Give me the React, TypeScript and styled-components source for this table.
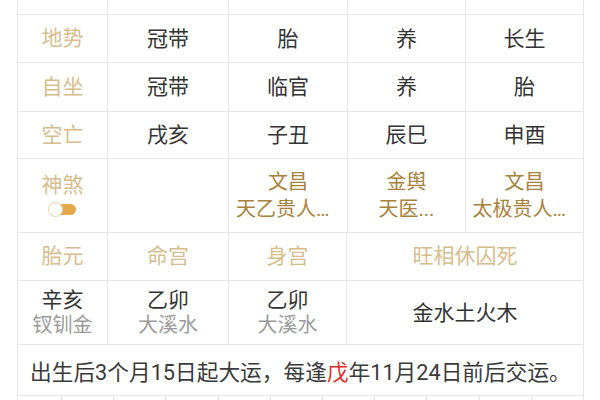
import React from "react";
import styled, { createGlobalStyle } from "styled-components";

const Global = createGlobalStyle`
  html, body { margin: 0; padding: 0; background: #fff; }
  body { font-family: Roboto, "Noto Sans CJK SC", sans-serif; overflow: hidden; }
`;

const Page = styled.div`
  width: 600px;
  height: 400px;
  overflow: hidden;
  padding-left: 17px;
  box-sizing: border-box;
`;

const Table = styled.div`
  width: 567px;
  margin-top: -34px;
  border-left: 1px solid #e6e6e6;
  box-sizing: border-box;
`;

const Row = styled.div<{ $cols: string; $h: number }>`
  display: grid;
  grid-template-columns: ${(p) => p.$cols};
  height: ${(p) => p.$h}px;
`;

const Cell = styled.div`
  border-right: 1px solid #e6e6e6;
  border-bottom: 1px solid #e6e6e6;
  display: flex;
  flex-direction: column;
  align-items: center;
  justify-content: center;
  min-width: 0;
  overflow: hidden;
  box-sizing: border-box;
`;

const Label = styled.span`
  color: #d8bd8c;
  font-size: 21px;
  line-height: 27px;
`;

const Value = styled.span`
  color: #333;
  font-size: 21px;
  line-height: 26px;
`;

const Sub = styled.span`
  color: #9a9a9a;
  font-size: 20px;
  line-height: 25px;
`;

const Star = styled.span`
  color: #a8823a;
  font-size: 20px;
  line-height: 27px;
  max-width: 104px;
  white-space: nowrap;
  overflow: hidden;
  text-overflow: ellipsis;
`;

const Toggle = styled.span`
  position: relative;
  width: 27px;
  height: 11px;
  border-radius: 6px;
  background: #e3a94b;
  margin-top: 5px;
  margin-bottom: 4px;
`;

const Knob = styled.span`
  position: absolute;
  left: 0;
  top: -1px;
  width: 13px;
  height: 13px;
  border-radius: 50%;
  background: #fff;
  box-shadow: 0 0 0 1px #e8d8b8;
`;

const Footer = styled.div`
  height: 51px;
  border-right: 1px solid #e6e6e6;
  border-bottom: 1px solid #e6e6e6;
  box-sizing: border-box;
  display: flex;
  align-items: center;
  padding-left: 12px;
  font-size: 21.7px;
  color: #3a3a3a;
  white-space: nowrap;
`;

const Red = styled.span`
  color: #d9322a;
`;

const MAIN = "90px 121px 119px 118px 118px";
const LOWER = "90px 121px 118px 237px";
const TAIL = "44px repeat(10, 1fr)";

const rows: { label: string; vals: string[]; h: number }[] = [
  { label: "副星", vals: ["偏财", "正官", "食神", "偏印"], h: 49 },
  { label: "地势", vals: ["冠带", "胎", "养", "长生"], h: 48 },
  { label: "自坐", vals: ["冠带", "临官", "养", "胎"], h: 49 },
  { label: "空亡", vals: ["戌亥", "子丑", "辰巳", "申酉"], h: 47 },
];

const stars: string[][] = [
  [],
  ["文昌", "天乙贵人福星"],
  ["金舆", "天医..."],
  ["文昌", "太极贵人福星"],
];

export default function App() {
  return (
    <Page>
      <Global />
      <Table>
        {rows.map((r) => (
          <Row key={r.label} $cols={MAIN} $h={r.h}>
            <Cell>
              <Label>{r.label}</Label>
            </Cell>
            {r.vals.map((v, i) => (
              <Cell key={i}>
                <Value>{v}</Value>
              </Cell>
            ))}
          </Row>
        ))}
        <Row $cols={MAIN} $h={74}>
          <Cell>
            <Label>神煞</Label>
            <Toggle>
              <Knob />
            </Toggle>
          </Cell>
          {stars.map((s, i) => (
            <Cell key={i}>
              {s.map((t) => (
                <Star key={t}>{t}</Star>
              ))}
            </Cell>
          ))}
        </Row>
        <Row $cols={LOWER} $h={48}>
          <Cell>
            <Label>胎元</Label>
          </Cell>
          <Cell>
            <Label>命宫</Label>
          </Cell>
          <Cell>
            <Label>身宫</Label>
          </Cell>
          <Cell>
            <Label>旺相休囚死</Label>
          </Cell>
        </Row>
        <Row $cols={LOWER} $h={64}>
          <Cell>
            <Value>辛亥</Value>
            <Sub>钗钏金</Sub>
          </Cell>
          <Cell>
            <Value>乙卯</Value>
            <Sub>大溪水</Sub>
          </Cell>
          <Cell>
            <Value>乙卯</Value>
            <Sub>大溪水</Sub>
          </Cell>
          <Cell>
            <Value>金水土火木</Value>
          </Cell>
        </Row>
        <Footer>
          出生后3个月15日起大运，每逢<Red>戊</Red>年11月24日前后交运。
        </Footer>
        <Row $cols={TAIL} $h={40}>
          {Array.from({ length: 11 }).map((_, i) => (
            <Cell key={i} />
          ))}
        </Row>
      </Table>
    </Page>
  );
}
